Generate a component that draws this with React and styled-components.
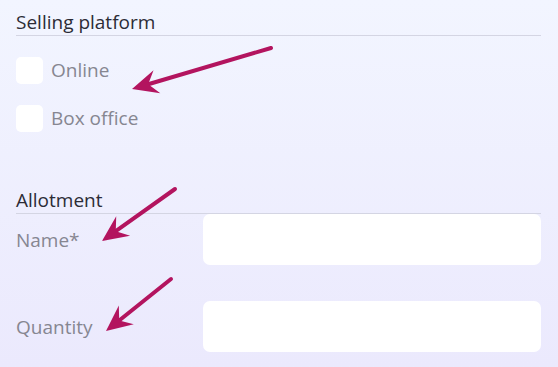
import styled, { createGlobalStyle } from 'styled-components';

const GlobalStyle = createGlobalStyle`
    html, body {
        margin: 0;
        padding: 0;
    }
    body {
        font-family: "Open Sans", "Noto Sans", sans-serif;
        background: linear-gradient(180deg, #f2f5ff 0%, #ebe9fd 100%);
        min-height: 367px;
    }
`;

const Page = styled.div`
    position: relative;
    width: 558px;
    height: 367px;
    box-sizing: border-box;
    padding: 10px 17px 0 16px;
    overflow: hidden;
`;

const Heading = styled.div`
    font-size: 19px;
    line-height: 24px;
    color: #2c2c36;
    padding-bottom: 1px;
    border-bottom: 1px solid #d4d5e3;
`;

const CheckList = styled.div`
    display: flex;
    flex-direction: column;
    gap: 21px;
    padding-top: 21px;
    margin-bottom: 56px;
`;

const CheckRow = styled.label`
    display: flex;
    align-items: center;
    gap: 8px;
    height: 27px;
    font-size: 19px;
    line-height: 27px;
    color: #868691;
`;

const Box = styled.span`
    width: 27px;
    height: 27px;
    border-radius: 5px;
    background: #ffffff;
`;

const Fields = styled.div`
    display: flex;
    flex-direction: column;
    gap: 36px;
`;

const FieldRow = styled.div`
    display: grid;
    grid-template-columns: 187px 1fr;
    align-items: center;
`;

const FieldLabel = styled.span`
    font-size: 19px;
    line-height: 24px;
    color: #868691;
`;

const Input = styled.div`
    height: 51px;
    border-radius: 7px;
    background: #ffffff;
`;

const Arrows = styled.svg`
    position: absolute;
    left: 0;
    top: 0;
    pointer-events: none;
`;

const Arrow = ({ x1, y1, x2, y2 }) => {
    const dx = x2 - x1;
    const dy = y2 - y1;
    const len = Math.hypot(dx, dy);
    const ux = dx / len;
    const uy = dy / len;
    const headLen = 26;
    const headW = 12;
    const bx = x2 - ux * headLen;
    const by = y2 - uy * headLen;
    const nx = -uy;
    const ny = ux;
    const back = 0.35;
    const lx = x2 - ux * headLen * (1 - back);
    const ly = y2 - uy * headLen * (1 - back);
    return (
        <g fill="#b3145f" stroke="#b3145f">
            <line x1={x1} y1={y1} x2={lx} y2={ly} strokeWidth="4" strokeLinecap="round" />
            <polygon
                stroke="none"
                points={`${x2},${y2} ${bx + nx * headW},${by + ny * headW} ${lx},${ly} ${bx - nx * headW},${by - ny * headW}`}
            />
        </g>
    );
};

const App = () => {
    return (
        <>
            <GlobalStyle />
            <Page>
                <Heading>Selling platform</Heading>
                <CheckList>
                    <CheckRow>
                        <Box />
                        Online
                    </CheckRow>
                    <CheckRow>
                        <Box />
                        Box office
                    </CheckRow>
                </CheckList>
                <Heading>Allotment</Heading>
                <Fields>
                    <FieldRow>
                        <FieldLabel>Name*</FieldLabel>
                        <Input />
                    </FieldRow>
                    <FieldRow>
                        <FieldLabel>Quantity</FieldLabel>
                        <Input />
                    </FieldRow>
                </Fields>
                <Arrows width="558" height="367">
                    <Arrow x1={271} y1={48} x2={132} y2={89} />
                    <Arrow x1={175} y1={189} x2={102} y2={241} />
                    <Arrow x1={171} y1={279} x2={106} y2={331} />
                </Arrows>
            </Page>
        </>
    );
};

export default App;
